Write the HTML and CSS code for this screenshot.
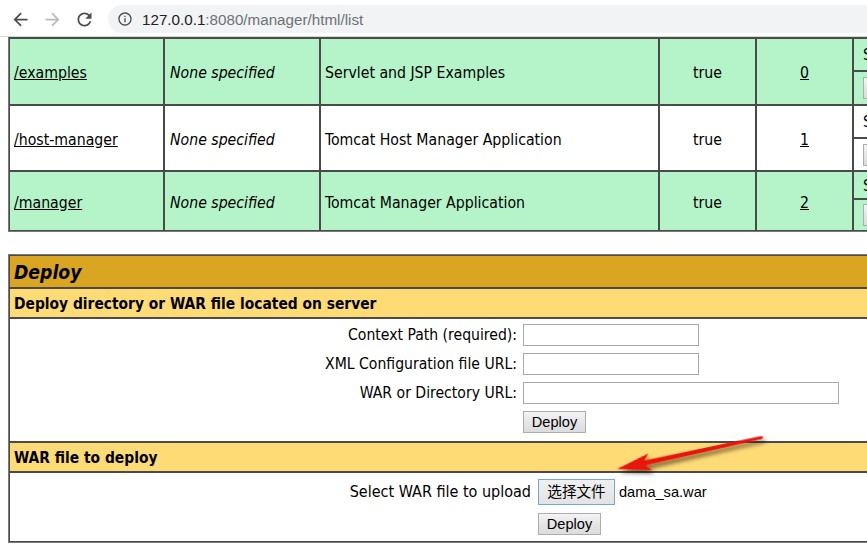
FILE: index.html
```html
<!DOCTYPE html>
<html lang="en">
<head>
<meta charset="utf-8">
<title>/manager</title>
<link rel="stylesheet" href="styles.css">
</head>
<body>
<div class="toolbar">
  <div class="nav">
    <span class="navbtn"><svg class="ico21" viewBox="0 0 24 24"><path fill="#4a4d51" d="M20 11H7.83l5.59-5.59L12 4l-8 8 8 8 1.41-1.41L7.83 13H20v-2z"/></svg></span>
    <span class="navbtn"><svg class="ico21" viewBox="0 0 24 24"><path fill="#b9bbbe" d="M12 4l-1.41 1.41L16.17 11H4v2h12.17l-5.58 5.59L12 20l8-8z"/></svg></span>
    <span class="navbtn"><svg class="ico21" viewBox="0 0 24 24"><path fill="#4a4d51" d="M17.65 6.35C16.2 4.9 14.21 4 12 4c-4.42 0-7.990 3.58-7.99 8s3.57 8 7.99 8c3.73 0 6.84-2.55 7.730-6h-2.08c-.82 2.33-3.04 4-5.65 4-3.31 0-6-2.69-6-6s2.69-6 6-6c1.66 0 3.14.69 4.22 1.78L13 11h7V4l-2.35 2.35z"/></svg></span>
  </div>
  <div class="omnibox">
    <svg class="info" viewBox="0 0 24 24"><path fill="#4a4d51" d="M11 7h2v2h-2zm0 4h2v6h-2zm1-9C6.48 2 2 6.48 2 12s4.48 10 10 10 10-4.48 10-10S17.52 2 12 2zm0 18c-4.41 0-8-3.59-8-8s3.590-8 8-8 8 3.59 8 8-3.59 8-8 8z"/></svg>
    <span class="host">127.0.0.1</span><span class="path">:8080/manager/html/list</span>
  </div>
</div>

<div class="page">
  <div class="apps">
    <div class="cell green"><a href="#">/examples</a></div>
    <div class="cell green"><i>None specified</i></div>
    <div class="cell green">Servlet and JSP Examples</div>
    <div class="cell green center">true</div>
    <div class="cell green center"><a href="#">0</a></div>
    <div class="cell green cmd"><div class="cmd-top">S</div><div class="cmd-bot"><button class="btn stub"></button></div></div>

    <div class="cell"><a href="#">/host-manager</a></div>
    <div class="cell"><i>None specified</i></div>
    <div class="cell">Tomcat Host Manager Application</div>
    <div class="cell center">true</div>
    <div class="cell center"><a href="#">1</a></div>
    <div class="cell cmd"><div class="cmd-top">S</div><div class="cmd-bot"><button class="btn stub"></button></div></div>

    <div class="cell green"><a href="#">/manager</a></div>
    <div class="cell green"><i>None specified</i></div>
    <div class="cell green">Tomcat Manager Application</div>
    <div class="cell green center">true</div>
    <div class="cell green center"><a href="#">2</a></div>
    <div class="cell green cmd"><div class="cmd-top short">S</div><div class="cmd-bot"><button class="btn stub"></button></div></div>
  </div>

  <div class="deploy">
    <div class="cell title">Deploy</div>
    <div class="cell hdr">Deploy directory or WAR file located on server</div>
    <div class="cell form1">
      <div class="grid1">
        <label class="lbl">Context Path (required):</label><input class="txt short-in" type="text">
        <label class="lbl">XML Configuration file URL:</label><input class="txt short-in" type="text">
        <label class="lbl">WAR or Directory URL:</label><input class="txt long-in" type="text">
        <span></span><span><button class="btn deploy-btn">Deploy</button></span>
      </div>
    </div>
    <div class="cell hdr">WAR file to deploy</div>
    <div class="cell form2">
      <div class="grid2">
        <label class="lbl lbl2">Select WAR file to upload</label>
        <span class="file"><button class="btn choose">选择文件</button><span class="fname">dama_sa.war</span></span>
        <span></span><span><button class="btn deploy-btn">Deploy</button></span>
      </div>
    </div>
  </div>
</div>

<svg class="arrow" width="867" height="551" viewBox="0 0 867 551">
  <defs>
    <filter id="sh" x="-20%" y="-50%" width="140%" height="200%">
      <feDropShadow dx="2" dy="4" stdDeviation="2.2" flood-color="#000" flood-opacity="0.55"/>
    </filter>
  </defs>
  <g transform="translate(617 469) rotate(-12.28)" filter="url(#sh)">
    <polygon fill="#e8140c" points="0,0 34,-8.5 28.5,-2.6 148,-1.4 150,0 148,1.4 28.5,2.6 34,8.5"/>
  </g>
</svg>
</body>
</html>
```
FILE: styles.css
```css
* { box-sizing: border-box; }
html, body {
  margin: 0;
  width: 867px;
  height: 551px;
  overflow: hidden;
  background: #fff;
}
body {
  position: relative;
  font-family: "DejaVu Sans Condensed", "Liberation Sans", sans-serif;
  font-size: 15.7px;
  color: #000;
}

/* browser toolbar */
.toolbar {
  height: 37px;
  border-bottom: 1px solid #d6d6d6;
  display: flex;
  align-items: flex-start;
}
.nav {
  display: flex;
  padding-left: 4px;
  padding-top: 9px;
}
.navbtn {
  width: 32px;
  height: 21px;
  display: flex;
  justify-content: center;
}
.ico21 { width: 21px; height: 21px; display: block; }
.omnibox {
  margin-left: 8px;
  margin-top: 5px;
  flex: 0 0 790px;
  height: 28px;
  border-radius: 14px;
  background: #f1f3f4;
  display: flex;
  align-items: center;
  padding-left: 9px;
  font-family: "Liberation Sans", sans-serif;
  font-size: 15.2px;
}
.info { width: 16px; height: 16px; display: block; margin-right: 9px; }
.host { color: #202124; }
.path { color: #6e7276; }

/* page */
.page { padding-left: 8px; }

.apps {
  display: grid;
  grid-template-columns: 155px 156px 339px 97px 97px 40px;
  grid-template-rows: 67px 66px 60px;
  width: max-content;
  border-left: 1px solid #7a7a7a;
  border-top: 1px solid #4d4d4d;
  border-bottom: 1px solid #7a7a7a;
}
.cell {
  border: 1px solid #4a4a4a;
  padding: 0 4px;
  display: flex;
  align-items: center;
  white-space: nowrap;
  padding-top: 2px;
}
.green { background: #b4f4c8; }
.center { justify-content: center; }
.cell a { color: #000; text-decoration: underline; }
.cell i { padding-left: 1px; }

.cmd {
  padding: 0;
  flex-direction: column;
  align-items: stretch;
}
.cmd-top {
  height: 32px;
  border-bottom: 1px solid #4a4a4a;
  padding-left: 9px;
  display: flex;
  align-items: center;
}
.cmd-top.short { height: 27px; }
.cmd-bot {
  flex: 1;
  border-top: 1px solid #4a4a4a;
  padding-left: 9px;
  display: flex;
  align-items: center;
}
.stub { width: 30px; }

.btn {
  font-family: "Liberation Sans", "Noto Sans CJK SC", sans-serif;
  font-size: 14.6px;
  color: #000;
  height: 22px;
  padding: 0 6px;
  border: 1px solid #adadad;
  border-radius: 0;
  background: linear-gradient(#f4f4f4, #e6e6e6 50%, #dcdcdc);
  line-height: 18px;
}

/* deploy section */
.deploy {
  margin-top: 22px;
  width: 1100px;
  border-left: 1px solid #7a7a7a;
  border-top: 1px solid #7a7a7a;
  border-bottom: 1px solid #7a7a7a;
  display: flex;
  flex-direction: column;
}
.title {
  height: 33px;
  background: #daa520;
  font-weight: bold;
  font-style: italic;
  font-size: 19.2px;
}
.hdr {
  height: 30px;
  background: #ffdb76;
  font-weight: bold;
  font-size: 15.4px;
}
.form1 {
  height: 124px;
  padding: 5px 0 0 0;
  align-items: flex-start;
}
.grid1 {
  display: grid;
  grid-template-columns: 507px auto;
  grid-auto-rows: 22px;
  column-gap: 6px;
  row-gap: 7px;
}
.lbl {
  text-align: right;
  align-self: center;
  line-height: 22px;
  font-size: 15.6px;
}
.lbl2 { font-size: 16px; }
.txt {
  height: 22px;
  border: 1px solid #a9a9a9;
  background: #fff;
  margin: 0;
  padding: 0 2px;
}
.short-in { width: 176px; }
.long-in { width: 316px; }
.deploy-btn { width: 63px; padding: 0; }

.form2 {
  height: 70px;
  padding: 6px 0 0 0;
  align-items: flex-start;
}
.grid2 {
  display: grid;
  grid-template-columns: 521px auto;
  grid-template-rows: 26px 22px;
  column-gap: 7px;
  row-gap: 8px;
}
.file { display: flex; align-items: center; }
.choose {
  height: 26px;
  width: 77px;
  padding: 0;
  border: 1px solid #6fa8dc;
  background: linear-gradient(#f0f0f0, #e3e3e3);
}
.fname {
  margin-left: 4px;
  font-family: "Liberation Sans", sans-serif;
  font-size: 14.6px;
}

.arrow {
  position: absolute;
  left: 0;
  top: 0;
  pointer-events: none;
}
```
